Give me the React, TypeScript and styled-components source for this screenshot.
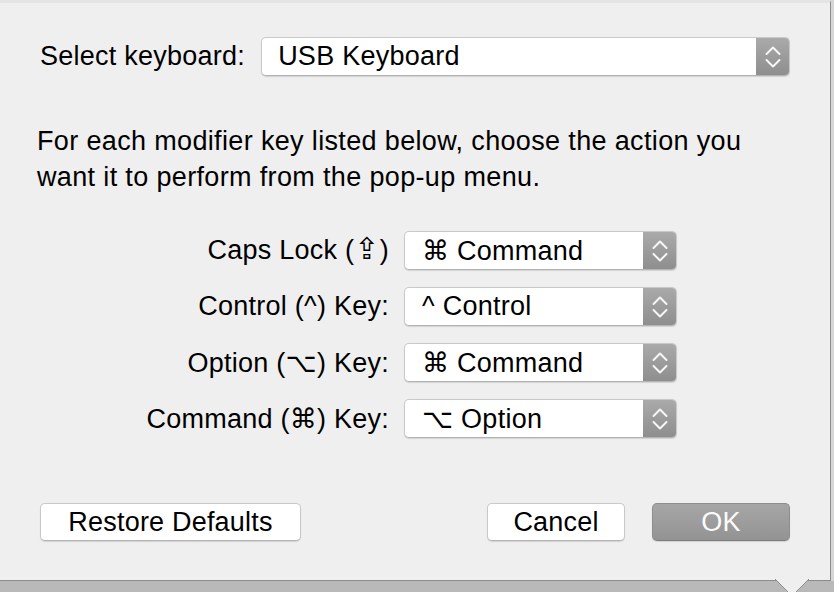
import React from "react";
import styled, { createGlobalStyle } from "styled-components";

const Global = createGlobalStyle`
  html, body { margin: 0; padding: 0; }
  body {
    width: 834px; height: 592px; overflow: hidden;
    font-family: "Liberation Sans", "DejaVu Sans", Arial, sans-serif;
  }
`;

const Backdrop = styled.div`
  position: relative;
  width: 834px;
  height: 592px;
  overflow: hidden;
  background: linear-gradient(#a9a9a9, #b9b9b9);
`;

const RightGutter = styled.div`
  position: absolute;
  top: 0;
  right: 0;
  width: 3px;
  height: 581px;
  background: #d6d6d6;
`;

const Sheet = styled.div`
  position: relative;
  z-index: 1;
  box-sizing: border-box;
  width: 831px;
  height: 581px;
  background: #efefef;
  border-top: 3px solid #e4e4e4;
  border-right: 1px solid #8c8c8c;
  border-bottom: 1px solid #8c8c8c;
  padding: 34px 40px 0 40px;
  display: flex;
  flex-direction: column;
  color: #000;
  font-size: 27px;
  letter-spacing: 0.25px;
`;

const Pointer = styled.svg`
  position: absolute;
  left: 774px;
  top: 579px;
  z-index: 2;
`;

const KeyboardRow = styled.div`
  display: flex;
  align-items: center;
  gap: 16px;
`;

const Label = styled.span`
  white-space: nowrap;
`;

const Popup = styled.div<{ $width?: number }>`
  box-sizing: border-box;
  height: 39px;
  ${(p) => (p.$width ? `width: ${p.$width}px;` : "flex: 1;")}
  display: flex;
  align-items: stretch;
  background: #fff;
  border: 1px solid #c9c9c9;
  border-bottom-color: #b3b3b3;
  border-radius: 5px;
  box-shadow: 0 1px 1px rgba(0, 0, 0, 0.12);
  overflow: hidden;
`;

const PopupText = styled.span<{ $pad: number }>`
  flex: 1;
  display: flex;
  align-items: center;
  padding-left: ${(p) => p.$pad}px;
  white-space: nowrap;
`;

const Stepper = styled.div`
  width: 33px;
  display: flex;
  align-items: center;
  justify-content: center;
  background: linear-gradient(#aaaaaa, #8e8e8e);
`;

const Paragraph = styled.p`
  margin: 47px 0 0 -3px;
  line-height: 36px;
  letter-spacing: 0.35px;
`;

const ModifierGrid = styled.div`
  margin-top: 36px;
  display: grid;
  grid-template-columns: 349px 273px;
  column-gap: 15px;
  row-gap: 17px;
  align-items: center;
`;

const ModLabel = styled.span`
  text-align: right;
  white-space: nowrap;
`;

const KeySymbol = styled.span`
  font-size: 30px;
  line-height: 0;
`;

const ButtonRow = styled.div`
  margin-top: 65px;
  display: flex;
  align-items: center;
`;

const Spacer = styled.div`
  flex: 1;
`;

const Button = styled.button<{ $width: number; $primary?: boolean }>`
  box-sizing: border-box;
  width: ${(p) => p.$width}px;
  height: 38px;
  margin: 0;
  padding: 0;
  font: inherit;
  letter-spacing: 0.2px;
  border-radius: 5px;
  color: ${(p) => (p.$primary ? "#fbfbfb" : "#000")};
  background: ${(p) =>
    p.$primary ? "linear-gradient(#a6a6a6, #939393)" : "#fff"};
  border: 1px solid ${(p) => (p.$primary ? "#8d8d8d" : "#c9c9c9")};
  border-bottom-color: ${(p) => (p.$primary ? "#7d7d7d" : "#b3b3b3")};
  box-shadow: 0 1px 1px rgba(0, 0, 0, 0.12);
  & + & {
    margin-left: 27px;
  }
`;

const Chevrons = () => (
  <svg width="18" height="26" viewBox="0 0 18 26" aria-hidden>
    <path
      d="M2.5 10 L9 3.5 L15.5 10 M2.5 16 L9 22.5 L15.5 16"
      fill="none"
      stroke="#f6f6f6"
      strokeWidth="2"
      strokeLinecap="round"
      strokeLinejoin="round"
    />
  </svg>
);

const modifiers: { pre: string; sym: string; post: string; value: string }[] = [
  { pre: "Caps Lock (", sym: "⇪", post: ")", value: "⌘ Command" },
  { pre: "Control (", sym: "^", post: ") Key:", value: "^ Control" },
  { pre: "Option (", sym: "⌥", post: ") Key:", value: "⌘ Command" },
  { pre: "Command (", sym: "⌘", post: ") Key:", value: "⌥ Option" },
];

export default function App() {
  return (
    <>
      <Global />
      <Backdrop>
        <RightGutter />
        <Sheet>
          <KeyboardRow>
            <Label>Select keyboard:</Label>
            <Popup>
              <PopupText $pad={16}>USB Keyboard</PopupText>
              <Stepper>
                <Chevrons />
              </Stepper>
            </Popup>
          </KeyboardRow>
          <Paragraph>
            For each modifier key listed below, choose the action you
            <br />
            want it to perform from the pop-up menu.
          </Paragraph>
          <ModifierGrid>
            {modifiers.map((m) => (
              <React.Fragment key={m.pre}>
                <ModLabel>
                  {m.pre}
                  {m.sym === "⇪" ? <KeySymbol>{m.sym}</KeySymbol> : m.sym}
                  {m.post}
                </ModLabel>
                <Popup $width={273}>
                  <PopupText $pad={17}>{m.value}</PopupText>
                  <Stepper>
                    <Chevrons />
                  </Stepper>
                </Popup>
              </React.Fragment>
            ))}
          </ModifierGrid>
          <ButtonRow>
            <Button $width={261}>Restore Defaults</Button>
            <Spacer />
            <Button $width={138}>Cancel</Button>
            <Button $width={138} $primary>
              OK
            </Button>
          </ButtonRow>
        </Sheet>
        <Pointer width="36" height="16" viewBox="0 0 36 16">
          <path d="M1 0 L18 17 L35 0 Z" fill="#efefef" />
          <path d="M1 0 L18 17 L35 0" fill="none" stroke="#8c8c8c" strokeWidth="1" />
        </Pointer>
      </Backdrop>
    </>
  );
}
